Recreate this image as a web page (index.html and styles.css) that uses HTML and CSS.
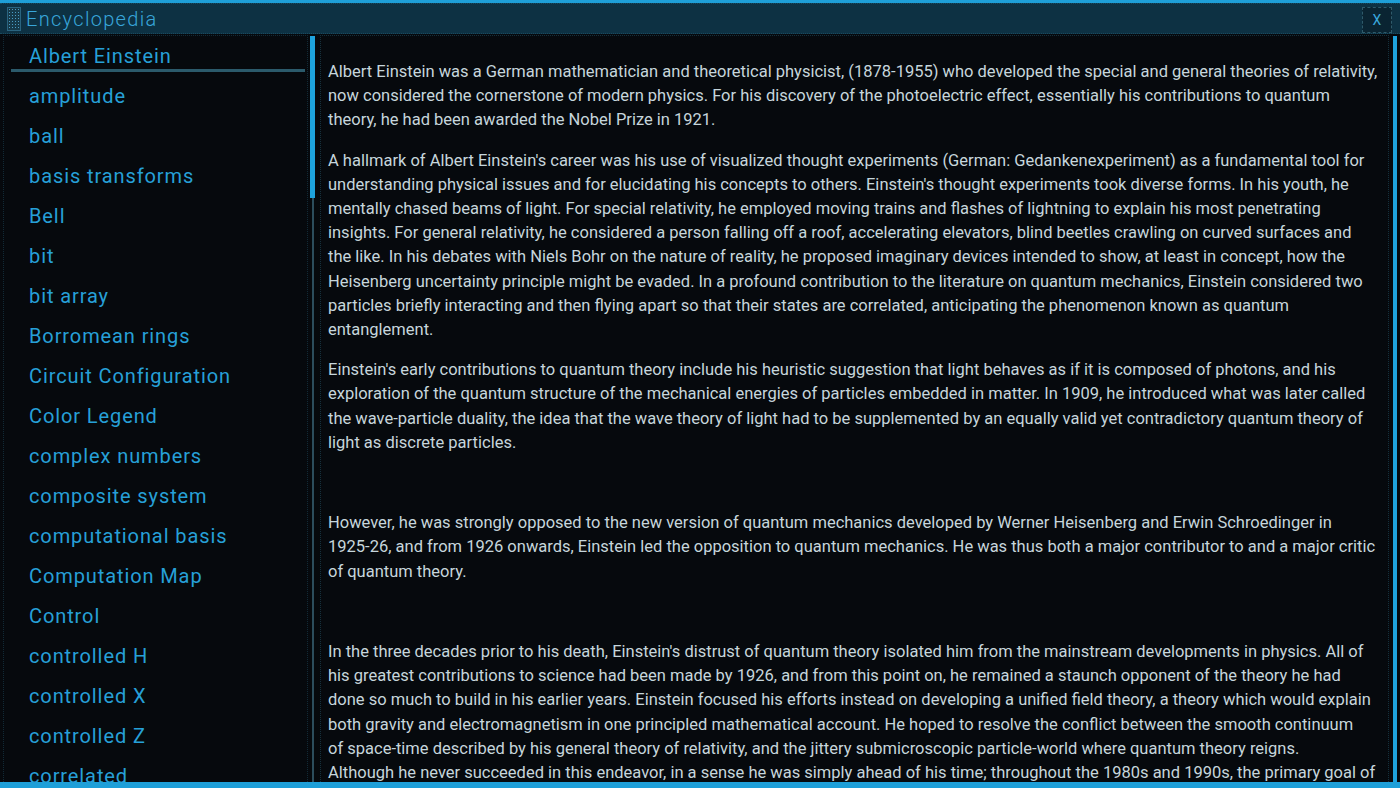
FILE: index.html
```html
<!DOCTYPE html>
<html>
<head>
<meta charset="utf-8">
<link rel="stylesheet" href="styles.css">
</head>
<body>
<div class="window">
  <div class="titlebar">
    <div class="title-icon"></div>
    <div class="title">Encyclopedia</div>
    <button class="close">X</button>
  </div>
  <div class="main">
    <div class="sidebar">
      <ul class="topics">
        <li class="selected">Albert Einstein</li>
        <li>amplitude</li>
        <li>ball</li>
        <li>basis transforms</li>
        <li>Bell</li>
        <li>bit</li>
        <li>bit array</li>
        <li>Borromean rings</li>
        <li>Circuit Configuration</li>
        <li>Color Legend</li>
        <li>complex numbers</li>
        <li>composite system</li>
        <li>computational basis</li>
        <li>Computation Map</li>
        <li>Control</li>
        <li>controlled H</li>
        <li>controlled X</li>
        <li>controlled Z</li>
        <li>correlated</li>
      </ul>
    </div>
    <div class="scrollbar left-scroll"><div class="thumb"></div></div>
    <div class="content">
      <div class="article">
        <p>Albert Einstein was a German mathematician and theoretical physicist, (1878-1955) who developed the special and general theories of relativity, now considered the cornerstone of modern physics. For his discovery of the photoelectric effect, essentially his contributions to quantum theory, he had been awarded the Nobel Prize in 1921.</p>
        <p>A hallmark of Albert Einstein's career was his use of visualized thought experiments (German: Gedankenexperiment) as a fundamental tool for understanding physical issues and for elucidating his concepts to others. Einstein's thought experiments took diverse forms. In his youth, he mentally chased beams of light. For special relativity, he employed moving trains and flashes of lightning to explain his most penetrating insights. For general relativity, he considered a person falling off a roof, accelerating elevators, blind beetles crawling on curved surfaces and <span class="nw">the like.</span> In his debates with Niels Bohr on the nature of reality, he proposed imaginary devices intended to show, at least in concept, how the Heisenberg uncertainty principle might be evaded. In a profound contribution to the literature on quantum mechanics, Einstein considered two particles briefly interacting and then flying apart so that their states are correlated, anticipating the phenomenon known as quantum entanglement.</p>
        <p>Einstein's early contributions to quantum theory include his heuristic suggestion that light behaves as if it is composed of photons, and his exploration of the quantum structure of the mechanical energies of particles embedded in matter. In 1909, he introduced what was later called the wave-particle duality, the idea that the wave theory of light had to be supplemented by an equally valid yet contradictory quantum theory of light as discrete particles.</p>
        <p>&nbsp;</p>
        <p>However, he was strongly opposed to the new version of quantum mechanics developed by Werner Heisenberg and Erwin Schroedinger in <span class="nw">1925-26,</span> and from 1926 onwards, Einstein led the opposition to quantum mechanics. He was thus both a major contributor to and a major critic of quantum theory.</p>
        <p>&nbsp;</p>
        <p>In the three decades prior to his death, Einstein's distrust of quantum theory isolated him from the mainstream developments in physics. All of his greatest contributions to science had been made by 1926, and from this point on, he remained a staunch opponent of the theory he had <span class="nw">done so</span> much to build in his earlier years. Einstein focused his efforts instead on developing a unified field theory, a theory which would explain both gravity and electromagnetism in one principled mathematical account. He hoped to resolve the conflict between the smooth continuum <span class="nw">of space-time</span> described by his general theory of relativity, and the jittery submicroscopic particle-world where quantum theory reigns. <span class="nw">Although he</span> never succeeded in this endeavor, in a sense he was simply ahead of his time; throughout the 1980s and 1990s, the primary goal of many theoretical physicists was the same.</p>
      </div>
    </div>
    <div class="scrollbar right-scroll"><div class="thumb"></div></div>
  </div>
</div>
</body>
</html>
```
FILE: styles.css
```css
* { box-sizing: border-box; }
html, body {
  margin: 0;
  padding: 0;
  width: 1400px;
  height: 788px;
  overflow: hidden;
  background: #06090d;
}
.window {
  width: 1400px;
  height: 788px;
  display: flex;
  flex-direction: column;
  border-top: 3px solid #1e9fd8;
  border-bottom: 6px solid #1e9fd8;
  background: #0a1820;
}
.titlebar {
  height: 31px;
  flex: none;
  display: flex;
  align-items: center;
  background: #0d3143;
  border-top: 1px dotted #1a4a5e;
  border-bottom: 1px dotted #1a4a5e;
  padding: 0 8px 0 7px;
}
.title-icon {
  width: 14px;
  height: 24px;
  background-color: #163a4a;
  background-image: radial-gradient(circle, #4a9cc4 0.7px, transparent 1px);
  background-size: 3px 3px;
  border: 1px solid #2a6480;
}
.title {
  flex: 1;
  margin-left: 5px;
  font-family: Roboto, "Liberation Sans", sans-serif;
  font-size: 20px;
  font-weight: 300;
  letter-spacing: 1.3px;
  color: #38a6da;
  line-height: 30px;
}
.close {
  width: 30px;
  height: 26px;
  margin-top: 2px;
  border: 1px dashed #2e5a6a;
  background: #0a2432;
  color: #3aa8dc;
  font-family: Roboto, "Liberation Sans", sans-serif;
  font-size: 14px;
  padding: 0;
}
.main {
  flex: 1;
  min-height: 0;
  display: flex;
  padding: 1px 3px 0 3px;
  background: #06090d;
}
.sidebar {
  width: 305px;
  flex: none;
  border: 1px dotted #112a36;
  border-bottom: none;
  overflow: hidden;
}
.topics {
  list-style: none;
  margin: 0;
  padding: 0 0 0 7px;
}
.topics li {
  height: 40px;
  line-height: 40px;
  padding-left: 18px;
  font-family: Roboto, "Liberation Sans", sans-serif;
  font-size: 20px;
  font-weight: 400;
  letter-spacing: 0.9px;
  color: #26a0d8;
  white-space: nowrap;
}
.topics li.selected {
  background: linear-gradient(#2b5a6b, #2b5a6b) no-repeat 0 33px / 294px 3px;
}
.scrollbar {
  flex: none;
  width: 5px;
  display: flex;
  flex-direction: column;
  align-items: center;
  margin-top: 1px;
}
.left-scroll {
  margin-left: 2px;
  background: linear-gradient(#2c4d5c, #2c4d5c) no-repeat center / 2px 100%;
}
.left-scroll .thumb {
  width: 5px;
  height: 162px;
  background: #1ea2dc;
}
.right-scroll {
  margin-left: 3px;
}
.right-scroll .thumb {
  width: 4px;
  flex: 1;
  background: #1ea2dc;
}
.content {
  flex: 1;
  margin-left: 5px;
  border: 1px dotted #15303c;
  border-bottom: none;
  overflow: hidden;
  padding: 24px 6px 0 7px;
}
.article p {
  margin: 0 0 16px 0;
  font-family: Roboto, "Liberation Sans", sans-serif;
  font-size: 16.5px;
  line-height: 24.2px;
  letter-spacing: 0;
  color: #c6d6dc;
}
.nw {
  white-space: nowrap;
}
```
